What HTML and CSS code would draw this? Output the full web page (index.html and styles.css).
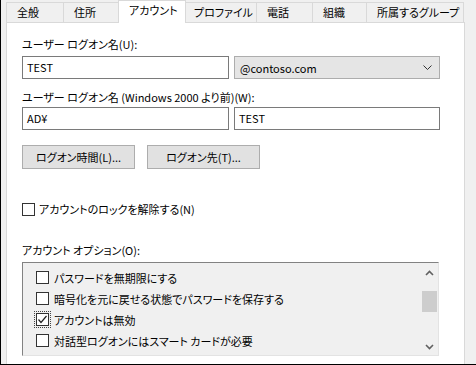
FILE: index.html
```html
<!DOCTYPE html>
<html lang="ja">
<head>
  <meta charset="UTF-8" />
  <title>プロパティ - アカウント</title>
  <link rel="stylesheet" href="styles.css">
</head>
<body>
  <div class="window">
    <div class="tabs">
      <div class="tab tab-general">全般</div>
      <div class="tab tab-address">住所</div>
      <div class="tab tab-account selected">アカウント</div>
      <div class="tab tab-profile">プロファイル</div>
      <div class="tab tab-phone">電話</div>
      <div class="tab tab-org">組織</div>
      <div class="tab tab-member">所属するグループ</div>
    </div>

    <div class="panel">
      <div class="label">ユーザー ログオン名(U):</div>
      <div class="field-row">
        <div class="textbox wide">TEST</div>
        <div class="combo">
          <span>@contoso.com</span>
          <svg class="combo-arrow" width="9" height="5" viewBox="0 0 9 5">
            <polyline points="0.5,0.5 4.5,4.5 8.5,0.5" fill="none" stroke="#333" stroke-width="1"/>
          </svg>
        </div>
      </div>

      <div class="label label-legacy">ユーザー ログオン名 (Windows 2000 より前)(W):</div>
      <div class="field-row">
        <div class="textbox wide">AD¥</div>
        <div class="textbox">TEST</div>
      </div>

      <div class="button-row">
        <div class="button">ログオン時間(L)...</div>
        <div class="button">ログオン先(T)...</div>
      </div>

      <div class="check unlock">
        <span class="box"></span>
        <span>アカウントのロックを解除する(N)</span>
      </div>

      <div class="label options-label">アカウント オプション(O):</div>
      <div class="listbox">
        <div class="items">
          <div class="check item"><span class="box"></span><span>パスワードを無期限にする</span></div>
          <div class="check item"><span class="box"></span><span>暗号化を元に戻せる状態でパスワードを保存する</span></div>
          <div class="check item focused">
            <span class="box">
              <svg width="11" height="11" viewBox="0 0 11 11">
                <polyline points="1.5,5.5 4,8.5 9.5,2" fill="none" stroke="#222" stroke-width="1.2"/>
              </svg>
            </span>
            <span>アカウントは無効</span>
          </div>
          <div class="check item"><span class="box"></span><span>対話型ログオンにはスマート カードが必要</span></div>
        </div>
        <div class="scrollbar">
          <div class="arrow">
            <svg width="9" height="6" viewBox="0 0 9 6">
              <polyline points="1,5 4.5,1.5 8,5" fill="none" stroke="#606060" stroke-width="1.6"/>
            </svg>
          </div>
          <div class="thumb"></div>
          <div class="arrow arrow-down">
            <svg width="9" height="6" viewBox="0 0 9 6">
              <polyline points="1,1 4.5,4.5 8,1" fill="none" stroke="#606060" stroke-width="1.6"/>
            </svg>
          </div>
        </div>
      </div>
    </div>
  </div>
</body>
</html>
```

FILE: styles.css
```css
:root {
  --face: #f0f0f0;
  --tab-border: #d9d9d9;
  --edit-border: #7a7a7a;
  --button-face: #e1e1e1;
  --button-border: #adadad;
}

html, body {
  margin: 0;
  padding: 0;
}

body {
  font-family: "Noto Sans CJK JP", "Noto Sans", sans-serif;
  font-size: 11px;
  font-feature-settings: "palt";
  color: #000;
  background: var(--face);
}

.window {
  width: 476px;
  height: 365px;
  box-sizing: border-box;
  border-left: 1px solid #000;
  border-bottom: 1px solid #000;
  padding-left: 5px;
  background: var(--face);
  display: flex;
  flex-direction: column;
  overflow: hidden;
}

/* タブ */
.tabs {
  display: flex;
  align-items: flex-end;
  height: 22px;
  flex-shrink: 0;
}

.tab {
  box-sizing: border-box;
  height: 20px;
  line-height: 19px;
  padding-left: 10px;
  border: 1px solid var(--tab-border);
  border-bottom: none;
  margin-left: -1px;
  background: var(--face);
  white-space: nowrap;
}

.tab-general { width: 58px; margin-left: 0; }
.tab-address { width: 56px; }
.tab-account { width: 68px; }
.tab-profile { width: 72px; padding-left: 8px; }
.tab-phone { width: 57px; }
.tab-org { width: 55px; }
.tab-member { width: 98px; }

.tab.selected {
  height: 23px;
  line-height: 19px;
  margin-bottom: -1px;
  background: #fff;
  position: relative;
  z-index: 1;
}

/* パネル */
.panel {
  flex: 1;
  width: 459px;
  box-sizing: border-box;
  background: #fff;
  border: 1px solid var(--tab-border);
  border-bottom: none;
  padding: 13px 0 0 15px;
}

.label {
  line-height: 16px;
  height: 16px;
  white-space: nowrap;
}

.field-row {
  display: flex;
  gap: 5px;
  margin-top: 4px;
}

.label-legacy {
  margin-top: 10px;
}

.label-legacy + .field-row {
  margin-top: 2px;
}

.textbox {
  box-sizing: border-box;
  width: 206px;
  height: 23px;
  line-height: 21px;
  padding-left: 4px;
  border: 1px solid var(--edit-border);
  background: #fff;
}

.textbox.wide {
  width: 207px;
}

.combo {
  box-sizing: border-box;
  width: 206px;
  height: 23px;
  padding: 0 7px 0 5px;
  border: 1px solid var(--button-border);
  background: #e5e5e5;
  display: flex;
  align-items: center;
  justify-content: space-between;
}

.button-row {
  display: flex;
  gap: 12px;
  margin-top: 15px;
}

.button {
  box-sizing: border-box;
  width: 113px;
  height: 24px;
  line-height: 22px;
  text-align: center;
  border: 1px solid var(--button-border);
  background: var(--button-face);
}

/* チェックボックス */
.check {
  display: flex;
  align-items: center;
  gap: 4px;
  white-space: nowrap;
}

.box {
  box-sizing: border-box;
  width: 13px;
  height: 13px;
  border: 1px solid #333;
  background: #fff;
  display: flex;
  align-items: center;
  justify-content: center;
  flex-shrink: 0;
}

.unlock {
  height: 16px;
  margin-top: 32px;
}

.options-label {
  margin-top: 25px;
}

/* リストボックス */
.listbox {
  box-sizing: border-box;
  width: 417px;
  height: 94px;
  margin-top: 4px;
  border: 1px solid #e3e3e3;
  border-top-color: #828282;
  border-left-color: #828282;
  background: var(--face);
  display: flex;
}

.items {
  flex: 1;
  padding: 4px 0 0 13px;
}

.item {
  height: 21px;
  gap: 5px;
}

.item.focused .box {
  outline: 1px dotted #444;
  outline-offset: 1px;
}

.scrollbar {
  width: 17px;
  display: flex;
  flex-direction: column;
  align-items: center;
}

.arrow {
  height: 17px;
  width: 17px;
  display: flex;
  align-items: center;
  justify-content: center;
  padding-top: 2px;
  box-sizing: border-box;
}

.arrow-down {
  margin-top: auto;
  padding-top: 0;
  padding-bottom: 0;
}

.thumb {
  width: 15px;
  height: 21px;
  margin-top: 11px;
  background: #cdcdcd;
}
```
